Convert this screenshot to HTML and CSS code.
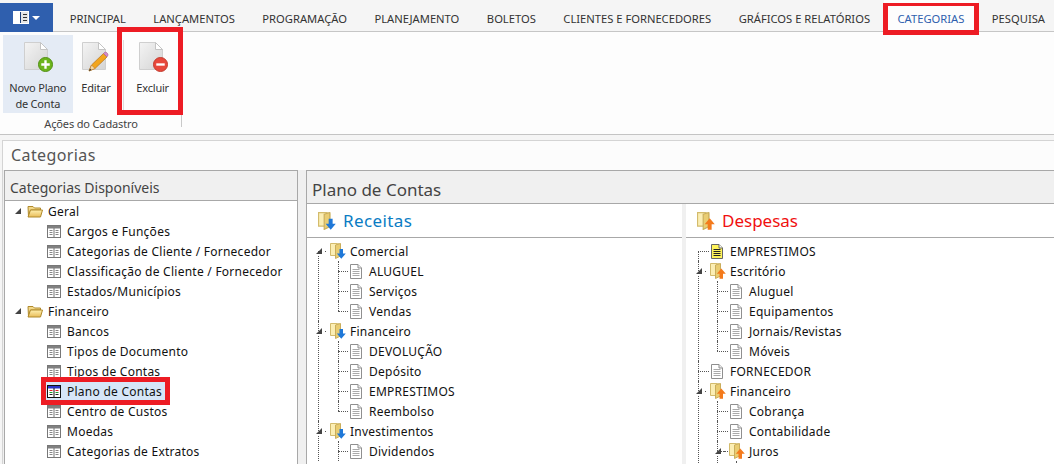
FILE: index.html
```html
<!DOCTYPE html>
<html lang="pt-BR">
<head>
    <meta charset="UTF-8">
    <meta name="viewport" content="width=device-width, initial-scale=1.0">
    <title>Categorias</title>
    <link rel="stylesheet" href="styles.css">
</head>
<body>
    <svg class="icon-defs" width="0" height="0">
        <defs>
            <linearGradient id="page-fill" x1="0" y1="0" x2="1" y2="1">
                <stop offset="0" stop-color="#f4f4f4"/>
                <stop offset="1" stop-color="#d4d4d4"/>
            </linearGradient>
            <linearGradient id="folder-fill" x1="0" y1="0" x2="0" y2="1">
                <stop offset="0" stop-color="#fff0b0"/>
                <stop offset="1" stop-color="#e8bc58"/>
            </linearGradient>
            <symbol id="big-page" viewBox="0 0 24 28">
                <path d="M0.500 0.500h16l7 7v20h-23z" fill="url(#page-fill)" stroke="#cfcfcf"/>
                <path d="M16.500 0.500v7h7z" fill="#fff" stroke="#c4c4c4"/>
            </symbol>
            <symbol id="table" viewBox="0 0 14 13">
                <rect x="0.500" y="0.500" width="13" height="12" fill="#fff" stroke="#777"/>
                <rect x="1" y="1" width="12" height="2.500" fill="#808080"/>
                <path d="M7 3v9" stroke="#777"/>
                <path d="M2.500 5.500h3M2.500 7.500h3M2.500 9.500h3M8.500 5.500h3M8.500 7.500h3M8.500 9.500h3" stroke="#888"/>
            </symbol>
            <symbol id="table-on" viewBox="0 0 14 13">
                <rect x="0.500" y="0.500" width="13" height="12" fill="#fff" stroke="#111"/>
                <rect x="1" y="1" width="12" height="2.500" fill="#2a35c8"/>
                <path d="M7 3v9" stroke="#111"/>
                <path d="M2.500 5.500h3M8.500 5.500h3" stroke="#d22"/>
                <path d="M2.500 7.500h3M8.500 7.500h3" stroke="#1a9a2a"/>
                <path d="M2.500 9.500h3M8.500 9.500h3" stroke="#222"/>
            </symbol>
            <symbol id="folder-open" viewBox="0 0 16 14">
                <path d="M1 2.500h5l1.500 1.500h6v2H3.500L1.500 12.500z" fill="#f3d98a" stroke="#b08a2c"/>
                <path d="M3.500 6h12l-2 7H1z" fill="url(#folder-fill)" stroke="#b08a2c"/>
            </symbol>
            <symbol id="leaf" viewBox="0 0 12 15">
                <path d="M0.500 0.500h7.500l3.500 3.500v10.500H0.500z" fill="#fff" stroke="#8f8f8f"/>
                <path d="M8 0.500v3.500h3.500" fill="#eee" stroke="#8f8f8f"/>
                <path d="M2.500 5.500h7M2.500 7.500h7M2.500 9.500h7M2.500 11.500h7" stroke="#aaa"/>
            </symbol>
            <symbol id="leaf-note" viewBox="0 0 12 15">
                <path d="M0.500 0.500h7.500l3.500 3.500v10.500H0.500z" fill="#fff45a" stroke="#666"/>
                <path d="M8 0.500v3.500h3.500" fill="#fff" stroke="#666"/>
                <path d="M2.500 5.500h7M2.500 7.500h7M2.500 9.500h7M2.500 11.500h7" stroke="#222"/>
            </symbol>
            <symbol id="folder-in" viewBox="0 0 16 16">
                <path d="M0.500 0.500h7l3 1v11h-10z" fill="#fbeeb4" stroke="#d3bb6c"/>
                <path d="M5.500 2l5-1.500v12.500l-5 2.500z" fill="#e9cd72" stroke="#c9ad5c"/>
                <path d="M9.500 6h3.500v4.500h2.800L11.300 15.800 6.800 10.500h2.700z" fill="#1f78d8"/>
            </symbol>
            <symbol id="folder-out" viewBox="0 0 16 16">
                <path d="M0.500 0.500h7l3 1v11h-10z" fill="#fbeeb4" stroke="#d3bb6c"/>
                <path d="M5.500 2l5-1.500v12.500l-5 2.500z" fill="#e9cd72" stroke="#c9ad5c"/>
                <path d="M9.500 15.800v-5H6.800L11.300 5.500l4.500 5.300H13v5z" fill="#f47a1c"/>
            </symbol>
        </defs>
    </svg>

    <header class="topbar">
        <button class="app-button">
            <svg width="16" height="13" viewBox="0 0 16 13"><rect x="0.500" y="0.500" width="15" height="12" fill="#1d3f7a" stroke="#fff"/><rect x="1" y="1" width="6" height="11" fill="#fff"/><rect x="8" y="1" width="7" height="11" fill="#e6e6e6"/><path d="M10 3.500h4M10 6.500h4M10 9.500h4" stroke="#333"/></svg>
            <span class="app-caret"></span>
        </button>
        <nav class="tabs">
            <a>PRINCIPAL</a>
            <a>LANÇAMENTOS</a>
            <a>PROGRAMAÇÃO</a>
            <a>PLANEJAMENTO</a>
            <a>BOLETOS</a>
            <a>CLIENTES E FORNECEDORES</a>
            <a>GRÁFICOS E RELATÓRIOS</a>
            <a class="active marked">CATEGORIAS</a>
            <a>PESQUISA</a>
        </nav>
    </header>

    <section class="ribbon">
        <div class="ribbon-group">
            <div class="ribbon-buttons">
                <div class="ribbon-btn hover">
                    <span class="big-icon">
                        <svg width="24" height="28"><use href="#big-page"/></svg>
                        <svg class="badge" width="15" height="15" viewBox="0 0 16 16"><circle cx="8" cy="8" r="7.500" fill="#6cb51c" stroke="#4e8c10"/><path d="M8 3.500v9M3.500 8h9" stroke="#fff" stroke-width="2.500"/></svg>
                    </span>
                    <span>Novo Plano<br>de Conta</span>
                </div>
                <div class="ribbon-btn edit">
                    <span class="big-icon">
                        <svg width="24" height="28"><use href="#big-page"/></svg>
                        <svg class="pencil" width="21" height="21" viewBox="0 0 21 21"><path d="M1 20l2.500-6L15.500 2.500 19 6 7 17.500z" fill="#f2a51e" stroke="#b5711a" stroke-width="0.700"/><path d="M1 20l2.500-6L7 17.500z" fill="#f4d6a8" stroke="#b5711a" stroke-width="0.500"/><path d="M1 20l1-2.500 1.500 1.500z" fill="#333"/><path d="M15.500 2.500l1.500-1.500c1-.6 3.600 2 3 3.200L19 6z" fill="#d58ac8" stroke="#99608f" stroke-width="0.500"/></svg>
                    </span>
                    <span>Editar</span>
                </div>
                <div class="ribbon-btn remove marked">
                    <span class="big-icon">
                        <svg width="24" height="28"><use href="#big-page"/></svg>
                        <svg class="badge" width="15" height="15" viewBox="0 0 16 16"><circle cx="8" cy="8" r="7.500" fill="#e8483c" stroke="#c0392b"/><path d="M3.500 8h9" stroke="#fff" stroke-width="2.500"/></svg>
                    </span>
                    <span>Excluir</span>
                </div>
            </div>
            <div class="ribbon-label">Ações do Cadastro</div>
        </div>
    </section>

    <main class="window">
        <h1 class="window-title">Categorias</h1>
        <div class="panels">
            <aside class="side-panel">
                <h2 class="side-title">Categorias Disponíveis</h2>
                <ul class="cat-tree">
                    <li class="cat-folder"><i class="arrow"></i><svg width="16" height="14"><use href="#folder-open"/></svg>Geral</li>
                    <li class="cat-item"><svg width="14" height="13"><use href="#table"/></svg>Cargos e Funções</li>
                    <li class="cat-item"><svg width="14" height="13"><use href="#table"/></svg>Categorias de Cliente / Fornecedor</li>
                    <li class="cat-item"><svg width="14" height="13"><use href="#table"/></svg>Classificação de Cliente / Fornecedor</li>
                    <li class="cat-item"><svg width="14" height="13"><use href="#table"/></svg>Estados/Municípios</li>
                    <li class="cat-folder"><i class="arrow"></i><svg width="16" height="14"><use href="#folder-open"/></svg>Financeiro</li>
                    <li class="cat-item"><svg width="14" height="13"><use href="#table"/></svg>Bancos</li>
                    <li class="cat-item"><svg width="14" height="13"><use href="#table"/></svg>Tipos de Documento</li>
                    <li class="cat-item"><svg width="14" height="13"><use href="#table"/></svg>Tipos de Contas</li>
                    <li class="cat-item selected marked"><svg width="14" height="13"><use href="#table-on"/></svg>Plano de Contas</li>
                    <li class="cat-item"><svg width="14" height="13"><use href="#table"/></svg>Centro de Custos</li>
                    <li class="cat-item"><svg width="14" height="13"><use href="#table"/></svg>Moedas</li>
                    <li class="cat-item"><svg width="14" height="13"><use href="#table"/></svg>Categorias de Extratos</li>
                </ul>
            </aside>

            <section class="plan-panel">
                <h2 class="plan-title">Plano de Contas</h2>
                <div class="plan-columns">
                    <div class="plan-col income">
                        <h3 class="col-title"><svg width="18" height="18"><use href="#folder-in"/></svg>Receitas</h3>
                        <ul class="tree">
                            <li class="open"><div class="row"><i class="arrow"></i><svg width="16" height="16"><use href="#folder-in"/></svg>Comercial</div>
                                <ul>
                                    <li><div class="row"><svg width="12" height="15"><use href="#leaf"/></svg>ALUGUEL</div></li>
                                    <li><div class="row"><svg width="12" height="15"><use href="#leaf"/></svg>Serviços</div></li>
                                    <li><div class="row"><svg width="12" height="15"><use href="#leaf"/></svg>Vendas</div></li>
                                </ul>
                            </li>
                            <li class="open"><div class="row"><i class="arrow"></i><svg width="16" height="16"><use href="#folder-in"/></svg>Financeiro</div>
                                <ul>
                                    <li><div class="row"><svg width="12" height="15"><use href="#leaf"/></svg>DEVOLUÇÃO</div></li>
                                    <li><div class="row"><svg width="12" height="15"><use href="#leaf"/></svg>Depósito</div></li>
                                    <li><div class="row"><svg width="12" height="15"><use href="#leaf"/></svg>EMPRESTIMOS</div></li>
                                    <li><div class="row"><svg width="12" height="15"><use href="#leaf"/></svg>Reembolso</div></li>
                                </ul>
                            </li>
                            <li class="open"><div class="row"><i class="arrow"></i><svg width="16" height="16"><use href="#folder-in"/></svg>Investimentos</div>
                                <ul>
                                    <li class="more"><div class="row"><svg width="12" height="15"><use href="#leaf"/></svg>Dividendos</div></li>
                                </ul>
                            </li>
                        </ul>
                    </div>
                    <div class="plan-col expense">
                        <h3 class="col-title"><svg width="18" height="18"><use href="#folder-out"/></svg>Despesas</h3>
                        <ul class="tree">
                            <li class="first-leaf"><div class="row"><svg width="12" height="15"><use href="#leaf-note"/></svg>EMPRESTIMOS</div></li>
                            <li class="open"><div class="row"><i class="arrow"></i><svg width="16" height="16"><use href="#folder-out"/></svg>Escritório</div>
                                <ul>
                                    <li><div class="row"><svg width="12" height="15"><use href="#leaf"/></svg>Aluguel</div></li>
                                    <li><div class="row"><svg width="12" height="15"><use href="#leaf"/></svg>Equipamentos</div></li>
                                    <li><div class="row"><svg width="12" height="15"><use href="#leaf"/></svg>Jornais/Revistas</div></li>
                                    <li><div class="row"><svg width="12" height="15"><use href="#leaf"/></svg>Móveis</div></li>
                                </ul>
                            </li>
                            <li class="first-leaf"><div class="row"><svg width="12" height="15"><use href="#leaf"/></svg>FORNECEDOR</div></li>
                            <li class="open"><div class="row"><i class="arrow"></i><svg width="16" height="16"><use href="#folder-out"/></svg>Financeiro</div>
                                <ul>
                                    <li class="more"><div class="row"><svg width="12" height="15"><use href="#leaf"/></svg>Cobrança</div></li>
                                    <li class="more"><div class="row"><svg width="12" height="15"><use href="#leaf"/></svg>Contabilidade</div></li>
                                    <li class="open more"><div class="row"><i class="arrow"></i><svg width="16" height="16"><use href="#folder-out"/></svg>Juros</div>
                                        <ul>
                                            <li class="more"><div class="row"></div></li>
                                        </ul>
                                    </li>
                                </ul>
                            </li>
                        </ul>
                    </div>
                </div>
            </section>
        </div>
    </main>
</body>
</html>
```

FILE: styles.css
```css
* {
    box-sizing: border-box;
}

html, body {
    height: 100%;
}

body {
    margin: 0;
    height: 464px;
    overflow: hidden;
    font-family: "Noto Sans", "Open Sans", sans-serif;
    font-size: 12px;
    color: #111;
    background-color: #fff;
}

ul {
    list-style: none;
    margin: 0;
    padding: 0;
}

h1, h2, h3 {
    margin: 0;
    font-weight: normal;
}

.icon-defs {
    position: absolute;
}

/* red marks drawn over the screenshot */
.marked {
    position: relative;
}

.marked::after {
    content: "";
    position: absolute;
    border: 5px solid #ed1c24;
    pointer-events: none;
}

/* top bar */
.topbar {
    display: flex;
    height: 32px;
    background-color: #f5f5f5;
    border-bottom: 1px solid #c6c6c6;
}

.app-button {
    display: flex;
    flex: none;
    align-items: center;
    justify-content: center;
    gap: 3px;
    width: 53px;
    height: 29px;
    margin-top: 3px;
    padding: 0;
    border: none;
    background-color: #2f5fae;
}

.app-caret {
    border-top: 4px solid #fff;
    border-left: 4px solid transparent;
    border-right: 4px solid transparent;
}

.tabs {
    display: flex;
    margin-left: 3px;
}

.tabs a {
    display: block;
    padding: 11px 13.75px 0;
    font-size: 11.2px;
    line-height: 16px;
    color: #333;
    white-space: nowrap;
}

.tabs a.active {
    height: 32px;
    color: #2f5fae;
    background-color: #fdfdfd;
}

.tabs a.marked::after {
    left: -1px;
    right: -1px;
    top: 3px;
    bottom: -3px;
    border-width: 3px 5px 5px;
}

/* ribbon */
.ribbon {
    height: 103px;
    padding: 3px 0 0 3px;
    background-color: #fdfdfd;
    border-bottom: 1px solid #c4c4c4;
}

.ribbon-group {
    width: 179px;
    height: 92px;
    border-right: 1px solid #c9c9c9;
}

.ribbon-buttons {
    display: flex;
    height: 78px;
}

.ribbon-btn {
    display: flex;
    flex-direction: column;
    align-items: center;
    font-size: 11px;
    line-height: 16px;
    letter-spacing: -0.2px;
    text-align: center;
    color: #333;
}

.ribbon-btn.hover {
    width: 70px;
    background-color: #e4ebf5;
}

.ribbon-btn.edit {
    width: 47px;
}

.ribbon-btn.remove {
    width: 58px;
    height: 70px;
    margin-top: 5px;
    margin-left: 4px;
    border-left: 1px solid #dcdcdc;
}

.ribbon-btn.remove .big-icon {
    margin-top: 2px;
}

.ribbon-btn.remove.marked::after {
    left: -7px;
    right: -2px;
    top: -13px;
    bottom: -5px;
}

.big-icon {
    position: relative;
    display: block;
    width: 24px;
    height: 28px;
    margin: 7px 4px 10px 0;
}

.big-icon .badge {
    position: absolute;
    right: -5px;
    bottom: -2px;
}

.big-icon .pencil {
    position: absolute;
    left: 6px;
    top: 9px;
}

.ribbon-label {
    margin-top: 3px;
    padding-right: 2px;
    font-size: 11px;
    line-height: 15px;
    letter-spacing: -0.15px;
    text-align: center;
    color: #444;
}

/* main window */
.window {
    height: 329px;
    padding: 5px 0 0 2px;
    background-color: #f5f5f5;
}

.window-title {
    height: 30px;
    padding: 3px 0 0 8px;
    font-size: 16px;
    line-height: 22px;
    letter-spacing: 0.4px;
    color: #555;
    background-color: #fcfcfc;
    border-top: 1px solid #d4d4d4;
    border-left: 1px solid #d4d4d4;
}

.panels {
    display: flex;
    gap: 8px;
    height: 294px;
    padding-left: 1px;
    background-color: #f0f0f0;
    border-left: 1px solid #d4d4d4;
    overflow: hidden;
}

.side-panel {
    width: 294px;
    flex: none;
    background-color: #fff;
    border-left: 1px solid #a8a8a8;
    border-right: 1px solid #a8a8a8;
}

.side-title {
    height: 31px;
    padding: 7px 0 0 5px;
    font-size: 14px;
    line-height: 20px;
    color: #444;
    background-color: #f0f0f0;
    border-top: 1px solid #a8a8a8;
    border-bottom: 1px solid #a8a8a8;
}

.cat-tree li {
    display: flex;
    align-items: center;
    height: 20px;
    letter-spacing: 0.25px;
    white-space: nowrap;
}

.cat-folder {
    padding-left: 10px;
}

.cat-folder svg {
    margin: 0 5px 0 6px;
}

.cat-item {
    padding-left: 42px;
}

.cat-item svg {
    margin-right: 6px;
    flex: none;
}

.cat-tree li.selected {
    width: 120px;
    margin-left: 41px;
    padding-left: 1px;
    background-color: #d6e6f8;
}

.cat-item.marked::after {
    left: -5px;
    right: -4px;
    top: -4px;
    bottom: -4px;
}

.arrow {
    display: block;
    flex: none;
    width: 0;
    height: 0;
    border-bottom: 6px solid #444;
    border-left: 6px solid transparent;
}

/* right side */
.plan-panel {
    flex: 1;
    min-width: 0;
    background-color: #f0f0f0;
    border-left: 1px solid #a8a8a8;
}

.plan-title {
    height: 34px;
    padding: 8px 0 0 5px;
    font-size: 17px;
    line-height: 22px;
    color: #444;
    border-top: 1px solid #a8a8a8;
    border-bottom: 1px solid #a8a8a8;
}

.plan-columns {
    display: flex;
    gap: 4px;
    height: 260px;
}

.plan-col {
    flex: none;
    width: 375px;
    background-color: #fff;
}

.col-title {
    display: flex;
    align-items: center;
    height: 34px;
    padding-left: 11px;
    font-size: 17px;
    border-bottom: 1px solid #a8a8a8;
}

.col-title svg {
    margin-right: 7px;
}

.income .col-title {
    color: #0a7cc4;
    letter-spacing: 0.4px;
}

.expense .col-title {
    color: #f01010;
}

.tree {
    padding: 3px 0 0 3px;
    letter-spacing: 0.25px;
}

.expense .tree {
    padding-left: 5px;
}

.tree ul {
    margin-left: 20px;
}

.expense .tree ul {
    margin-left: 19px;
}

.tree li {
    position: relative;
}

/* dotted connector lines */
.tree li::before {
    content: "";
    position: absolute;
    left: 8px;
    top: 0;
    bottom: 0;
    border-left: 1px dotted #555;
}

.expense .tree li::before {
    left: 7px;
}

.tree ul > li::after,
.first-leaf::after {
    content: "";
    position: absolute;
    left: 8px;
    top: 10px;
    width: 10px;
    border-top: 1px dotted #555;
}

.expense .tree ul > li::after,
.expense .first-leaf::after {
    left: 7px;
    width: 11px;
}

.tree ul > li:last-child:not(.more)::before {
    bottom: 10px;
}

.tree > li:first-child::before {
    top: 10px;
}

.row {
    position: relative;
    display: flex;
    align-items: center;
    height: 20px;
    padding-left: 20px;
    white-space: nowrap;
}

.row svg {
    flex: none;
    margin-right: 7px;
    background-color: #fff;
}

.open > .row {
    padding-left: 6px;
    background-image: linear-gradient(#555, #555);
    background-repeat: no-repeat;
    background-size: 1px 1px;
    background-position: 15px 10px;
}

.expense .open > .row {
    padding-left: 5px;
    background-position: 14px 10px;
}

.open > .row .arrow {
    margin-right: 8px;
    outline: 1px solid #fff;
}

.open > .row svg {
    margin-right: 4px;
}
```
